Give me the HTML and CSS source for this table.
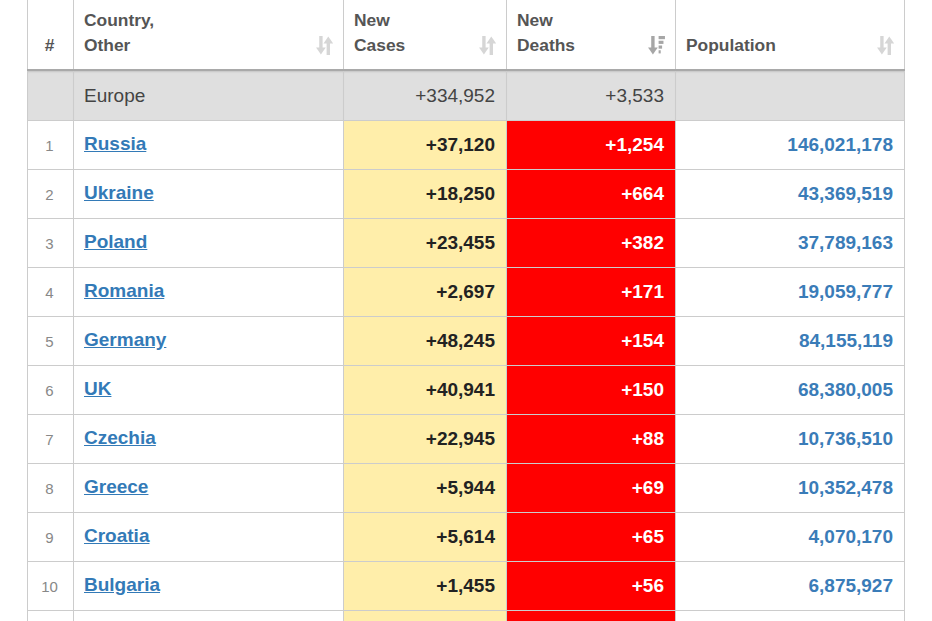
FILE: index.html
```html
<!DOCTYPE html>
<html>
<head>
<meta charset="utf-8">
<link rel="stylesheet" href="styles.css">
</head>
<body>
<div class="wrap">
<table class="tbl">
  <colgroup>
    <col class="c-rank"><col class="c-country"><col class="c-cases"><col class="c-deaths"><col class="c-pop">
  </colgroup>
  <thead>
    <tr>
      <th class="th-rank"><div class="th-in"><span>#</span></div></th>
      <th><div class="th-in"><span>Country,<br>Other</span>
        <svg class="sort" viewBox="0 0 16 18"><g fill="currentColor"><rect x="3" y="0" width="3.2" height="12"/><path d="M0 11h9.2l-4.6 6.5z"/><rect x="10" y="6" width="3.2" height="12"/><path d="M7 7h9.2l-4.6-6.5z"/></g></svg></div></th>
      <th><div class="th-in"><span>New<br>Cases</span>
        <svg class="sort" viewBox="0 0 16 18"><g fill="currentColor"><rect x="3" y="0" width="3.2" height="12"/><path d="M0 11h9.2l-4.6 6.5z"/><rect x="10" y="6" width="3.2" height="12"/><path d="M7 7h9.2l-4.6-6.5z"/></g></svg></div></th>
      <th><div class="th-in"><span>New<br>Deaths</span>
        <svg class="sort on" viewBox="0 0 16 18"><g fill="currentColor"><rect x="3" y="0" width="3.2" height="12"/><path d="M0 11h9.2l-4.6 6.5z"/><rect x="10" y="0" width="6" height="3"/><rect x="10" y="4.5" width="4.6" height="3"/><rect x="10" y="9" width="3.3" height="3"/><rect x="10" y="13.5" width="2" height="3"/></g></svg></div></th>
      <th><div class="th-in"><span>Population</span>
        <svg class="sort" viewBox="0 0 16 18"><g fill="currentColor"><rect x="3" y="0" width="3.2" height="12"/><path d="M0 11h9.2l-4.6 6.5z"/><rect x="10" y="6" width="3.2" height="12"/><path d="M7 7h9.2l-4.6-6.5z"/></g></svg></div></th>
    </tr>
  </thead>
  <tbody>
    <tr class="region">
      <td></td><td class="name">Europe</td><td class="num">+334,952</td><td class="num">+3,533</td><td></td>
    </tr>
    <tr><td class="rank">1</td><td class="name"><a href="#">Russia</a></td><td class="num cases">+37,120</td><td class="num deaths">+1,254</td><td class="num pop">146,021,178</td></tr>
    <tr><td class="rank">2</td><td class="name"><a href="#">Ukraine</a></td><td class="num cases">+18,250</td><td class="num deaths">+664</td><td class="num pop">43,369,519</td></tr>
    <tr><td class="rank">3</td><td class="name"><a href="#">Poland</a></td><td class="num cases">+23,455</td><td class="num deaths">+382</td><td class="num pop">37,789,163</td></tr>
    <tr><td class="rank">4</td><td class="name"><a href="#">Romania</a></td><td class="num cases">+2,697</td><td class="num deaths">+171</td><td class="num pop">19,059,777</td></tr>
    <tr><td class="rank">5</td><td class="name"><a href="#">Germany</a></td><td class="num cases">+48,245</td><td class="num deaths">+154</td><td class="num pop">84,155,119</td></tr>
    <tr><td class="rank">6</td><td class="name"><a href="#">UK</a></td><td class="num cases">+40,941</td><td class="num deaths">+150</td><td class="num pop">68,380,005</td></tr>
    <tr><td class="rank">7</td><td class="name"><a href="#">Czechia</a></td><td class="num cases">+22,945</td><td class="num deaths">+88</td><td class="num pop">10,736,510</td></tr>
    <tr><td class="rank">8</td><td class="name"><a href="#">Greece</a></td><td class="num cases">+5,944</td><td class="num deaths">+69</td><td class="num pop">10,352,478</td></tr>
    <tr><td class="rank">9</td><td class="name"><a href="#">Croatia</a></td><td class="num cases">+5,614</td><td class="num deaths">+65</td><td class="num pop">4,070,170</td></tr>
    <tr><td class="rank">10</td><td class="name"><a href="#">Bulgaria</a></td><td class="num cases">+1,455</td><td class="num deaths">+56</td><td class="num pop">6,875,927</td></tr>
    <tr><td class="rank"></td><td class="name"></td><td class="num cases"></td><td class="num deaths"></td><td class="num pop"></td></tr>
  </tbody>
</table>
</div>
</body>
</html>
```
FILE: styles.css
```css
html, body {
  margin: 0;
  padding: 0;
  background: #fff;
  overflow: hidden;
}
body {
  font-family: "Liberation Sans", Arial, sans-serif;
  color: #333;
}
.wrap {
  padding-left: 27px;
  height: 621px;
  overflow: hidden;
}
.tbl {
  border-collapse: collapse;
  table-layout: fixed;
  width: 877px;
}
.c-rank { width: 46px; }
.c-country { width: 270px; }
.c-cases { width: 163px; }
.c-deaths { width: 169px; }
.c-pop { width: 229px; }

.tbl th {
  height: 69px;
  padding: 0;
  border-left: 1px solid #ccc;
  border-right: 1px solid #ccc;
  border-bottom: 2px solid #a9a9a9;
  text-align: left;
  vertical-align: bottom;
  font-size: 17.4px;
  font-weight: bold;
  color: #555;
  line-height: 25px;
}
.th-in {
  display: flex;
  align-items: flex-end;
  justify-content: space-between;
  padding: 0 10px 11px 10px;
}
.th-rank .th-in {
  justify-content: center;
  padding-left: 0;
  padding-right: 2px;
}
.sort {
  width: 17px;
  height: 19px;
  color: #d6d6d6;
  margin-bottom: 3px;
  flex: none;
}
.sort.on {
  color: #a6a6a6;
}
.tbl td {
  height: 48px;
  padding: 0 11px;
  border: 1px solid #ccc;
  vertical-align: middle;
  font-size: 19px;
  white-space: nowrap;
}
.tbl .region td {
  height: 49px;
  border-top: 0;
  background: #dfdfdf;
  color: #444;
  box-shadow: inset 0 2px 2px -1px rgba(0,0,0,0.12);
}
.rank {
  text-align: center;
  font-size: 15px !important;
  color: #888;
  padding: 0 2px 0 0 !important;
}
.name {
  padding-left: 10px !important;
}
.name a {
  color: #337ab7;
  font-weight: bold;
  text-decoration: underline;
  position: relative;
  top: -1px;
}
.num {
  text-align: right;
}
.cases {
  background: #ffeeaa;
  font-weight: bold;
  color: #222;
}
.deaths {
  background: #ff0000;
  color: #fff;
  font-weight: bold;
}
.pop {
  color: #3a7cb8;
  font-weight: bold;
}
```
